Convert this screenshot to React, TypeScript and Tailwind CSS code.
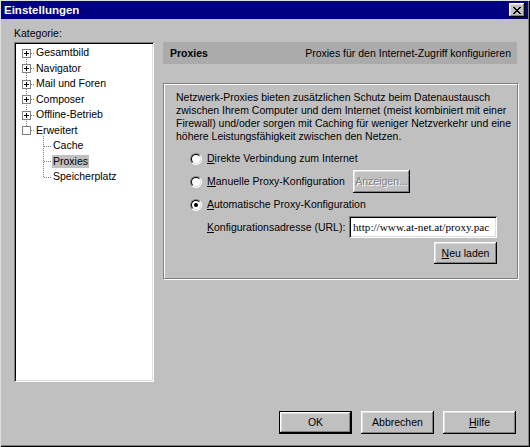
import React from 'react';

const ui = "font-['Liberation_Sans',Arial,sans-serif] text-[10.5px] leading-[13px] text-black";
const raised =
	'shadow-[inset_-1px_-1px_0_#000,inset_1px_1px_0_#fff,inset_-2px_-2px_0_#808080,inset_2px_2px_0_#dfdfdf]';
const sunken =
	'shadow-[inset_1px_1px_0_#808080,inset_-1px_-1px_0_#fff,inset_2px_2px_0_#000,inset_-2px_-2px_0_#dfdfdf]';

function U({ children }: { children: React.ReactNode }) {
	return <span className="underline underline-offset-[1px]">{children}</span>;
}

function Button({
	children,
	isDefault,
	disabled,
	className = '',
}: {
	children: React.ReactNode;
	isDefault?: boolean;
	disabled?: boolean;
	className?: string;
}) {
	if (isDefault) {
		return (
			<div className={`border border-black bg-[#c0c0c0] ${className}`}>
				<div className={`w-full h-full flex items-center justify-center ${raised}`}>{children}</div>
			</div>
		);
	}
	return (
		<div
			className={`bg-[#c0c0c0] flex items-center justify-center ${raised} ${
				disabled ? 'text-[#808080] [text-shadow:1px_1px_0_#fff]' : ''
			} ${className}`}
		>
			{children}
		</div>
	);
}

function Radio({ checked }: { checked?: boolean }) {
	return (
		<div className="w-[12px] h-[12px] rounded-full border border-t-[#808080] border-l-[#808080] border-r-white border-b-white shrink-0">
			<div className="w-full h-full rounded-full border border-t-black border-l-black border-r-[#dfdfdf] border-b-[#dfdfdf] bg-white flex items-center justify-center">
				{checked && <div className="w-[4px] h-[4px] rounded-full bg-black" />}
			</div>
		</div>
	);
}

type Node = { label: string; level: number; box?: 'plus' | 'empty'; selected?: boolean };

const tree: Node[] = [
	{ label: 'Gesamtbild', level: 0, box: 'plus' },
	{ label: 'Navigator', level: 0, box: 'plus' },
	{ label: 'Mail und Foren', level: 0, box: 'plus' },
	{ label: 'Composer', level: 0, box: 'plus' },
	{ label: 'Offline-Betrieb', level: 0, box: 'plus' },
	{ label: 'Erweitert', level: 0, box: 'empty' },
	{ label: 'Cache', level: 1 },
	{ label: 'Proxies', level: 1, selected: true },
	{ label: 'Speicherplatz', level: 1 },
];

// row centre, relative to the top of the tree box
const rowY = (i: number) => Math.round(10.75 + 15.5 * i);

function TreeLines() {
	const dots = { stroke: '#808080', strokeDasharray: '1 1', shapeRendering: 'crispEdges' as const };
	return (
		<svg className="absolute inset-0 pointer-events-none" width="140" height="340">
			{/* trunk through the top level boxes */}
			<line x1="12.5" y1={rowY(0)} x2="12.5" y2={rowY(5)} {...dots} />
			{tree.slice(0, 6).map((_, i) => (
				<line key={i} x1="17" y1={rowY(i) + 0.5} x2="21" y2={rowY(i) + 0.5} {...dots} />
			))}
			{/* children of Erweitert */}
			<line x1="29.5" y1={rowY(5) + 6} x2="29.5" y2={rowY(8) + 1} {...dots} />
			{[6, 7, 8].map((i) => (
				<line key={i} x1="30" y1={rowY(i) + 0.5} x2="38" y2={rowY(i) + 0.5} {...dots} />
			))}
			{tree.slice(0, 6).map((n, i) => (
				<g key={'b' + i} shapeRendering="crispEdges">
					<rect x="8.5" y={rowY(i) - 3.5} width="8" height="8" fill="#fff" stroke="#808080" />
					{n.box === 'plus' && (
						<>
							<line x1="10" y1={rowY(i) + 0.5} x2="15" y2={rowY(i) + 0.5} stroke="#000" />
							<line x1="12.5" y1={rowY(i) - 2} x2="12.5" y2={rowY(i) + 3} stroke="#000" />
						</>
					)}
				</g>
			))}
		</svg>
	);
}

export default function App() {
	return (
		<div
			className={`${ui} w-[530px] h-[447px] bg-[#c0c0c0] flex flex-col overflow-hidden shadow-[inset_1px_1px_0_#dfdfdf,inset_-1px_-1px_0_#000,inset_-2px_-2px_0_#808080]`}
		>
			{/* title bar */}
			<div className="ml-[1px] mr-[2px] mt-[1px] h-[18px] bg-[#000080] flex items-center justify-between pl-[3px] pr-[3px]">
				<span className="text-white font-bold text-[11.5px]">Einstellungen</span>
				<div className={`w-[16px] h-[14px] bg-[#c0c0c0] flex items-center justify-center ${raised}`}>
					<svg width="8" height="7" viewBox="0 0 8 7" shapeRendering="crispEdges">
						<path d="M0 0h2v1h1v1h2v-1h1v-1h2v1h-1v1h-1v1h-1v1h1v1h1v1h1v1h-2v-1h-1v-1h-2v1h-1v1h-2v-1h1v-1h1v-1h1v-1h-1v-1h-1v-1h-1z" fill="#000" />
					</svg>
				</div>
			</div>

			<div className="flex items-start">
				{/* category tree */}
				<div className="ml-[14px] pt-[8px] w-[140px] shrink-0">
					<div className="h-[13px]">Kategorie:</div>
					<div className={`relative mt-[2px] h-[340px] bg-white pt-[3px] ${sunken}`}>
						<TreeLines />
						{tree.map((n) => (
							<div key={n.label} className="h-[15.5px] flex items-center whitespace-nowrap">
								{n.level === 0 ? (
									<span className="ml-[22px]">{n.label}</span>
								) : (
									<span className={`ml-[38px] px-[1px] ${n.selected ? 'bg-[#c0c0c0]' : ''}`}>
										{n.label}
									</span>
								)}
							</div>
						))}
					</div>
				</div>

				{/* right pane */}
				<div className="ml-[9px] mt-[23px] w-[356px]">
					<div className="w-[354px] h-[22px] bg-[#ababab] flex items-center justify-between pl-[7px] pr-[6px]">
						<span className="font-bold">Proxies</span>
						<span>Proxies für den Internet-Zugriff konfigurieren</span>
					</div>

					<div className="mt-[19px] h-[196px] w-[355px] border border-[#808080] shadow-[inset_1px_1px_0_#fff,1px_1px_0_#fff] pl-[12px] pt-[7px]">
						<p className="whitespace-nowrap">
							Netzwerk-Proxies bieten zusätzlichen Schutz beim Datenaustausch
							<br />
							zwischen Ihrem Computer und dem Internet (meist kombiniert mit einer
							<br />
							Firewall) und/oder sorgen mit Caching für weniger Netzverkehr und eine
							<br />
							höhere Leistungsfähigkeit zwischen den Netzen.
						</p>

						<div className="mt-[4px] ml-[14px]">
							<div className="h-[23px] flex items-center gap-[5px]">
								<Radio />
								<span>
									<U>D</U>irekte Verbindung zum Internet
								</span>
							</div>
							<div className="h-[23px] flex items-center">
								<div className="w-[163px] flex items-center gap-[5px]">
									<Radio />
									<span>
										<U>M</U>anuelle Proxy-Konfiguration
									</span>
								</div>
								<Button disabled className="w-[57px] h-[23px]">
									Anzeigen...
								</Button>
							</div>
							<div className="h-[23px] flex items-center gap-[5px]">
								<Radio checked />
								<span>
									<U>A</U>utomatische Proxy-Konfiguration
								</span>
							</div>
						</div>

						<div className="ml-[31px] w-[290px] flex flex-col">
							<div className="flex items-center justify-between">
								<span>
									<U>K</U>onfigurationsadresse (URL):
								</span>
								<div
									className={`w-[148px] h-[22px] bg-white flex items-center pl-[4px] overflow-hidden whitespace-nowrap font-['Liberation_Serif',serif] text-[11.2px] ${sunken}`}
								>
									http://www.at-net.at/proxy.pac
								</div>
							</div>
							<Button className="self-end mt-[4px] w-[63px] h-[22px]">
								<U>N</U>eu laden
							</Button>
						</div>
					</div>
				</div>
			</div>

			{/* dialog buttons */}
			<div className="ml-[279px] mt-[29px] flex gap-[9px]">
				<Button isDefault className="w-[73px] h-[23px]">
					OK
				</Button>
				<Button className="w-[73px] h-[23px]">Abbrechen</Button>
				<Button className="w-[73px] h-[23px]">
					<U>H</U>ilfe
				</Button>
			</div>
		</div>
	);
}
